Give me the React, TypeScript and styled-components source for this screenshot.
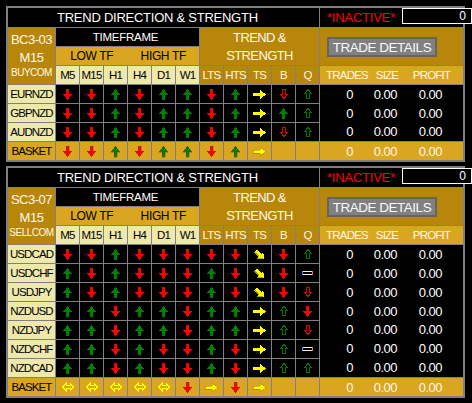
import React from 'react';
import styled, { createGlobalStyle } from 'styled-components';

const LINE = '#808080';
const DARK_GOLD = '#B8860B';
const GOLD = '#DAA520';
const PALE = '#EEE8AA';
const CREAM = '#FFF8E8';
const RED = '#FF0000';
const GREEN = '#008000';
const YELLOW = '#FFFF00';

interface PairRow {
  pair: string;
  sig: string;
}

interface PanelData {
  code: string;
  tf: string;
  mode: string;
  rows: PairRow[];
  basket: string;
}

// D down, U up, R right, X diagonal, d/u hollow, = flat, B both ways, _ empty
const PANELS: PanelData[] = [
  {
    code: 'BC3-03',
    tf: 'M15',
    mode: 'BUYCOM',
    rows: [
      { pair: 'EURNZD', sig: 'DDUDUUDURdu' },
      { pair: 'GBPNZD', sig: 'DDUDUUDURUu' },
      { pair: 'AUDNZD', sig: 'DDUDUUDURdu' },
    ],
    basket: 'DDUDUUDUR__',
  },
  {
    code: 'SC3-07',
    tf: 'M15',
    mode: 'SELLCOM',
    rows: [
      { pair: 'USDCAD', sig: 'DDUDDDDDXDu' },
      { pair: 'USDCHF', sig: 'UDUDDDUDXD=' },
      { pair: 'USDJPY', sig: 'UDUDDDUDXDd' },
      { pair: 'NZDUSD', sig: 'UUDUUDUURuD' },
      { pair: 'NZDJPY', sig: 'UUDUUDUURud' },
      { pair: 'NZDCHF', sig: 'UUDUDDUDRu=' },
      { pair: 'NZDCAD', sig: 'UUDUDDUDRuu' },
    ],
    basket: 'BBBBBDRDR__',
  },
];

const TF_COLS = ['M5', 'M15', 'H1', 'H4', 'D1', 'W1'];
const TS_COLS = ['LTS', 'HTS', 'TS', 'B', 'Q'];

const GlobalStyle = createGlobalStyle`
  html, body {
    margin: 0;
    padding: 0;
    background: #000;
  }
  body {
    font-family: 'Liberation Sans', Arial, sans-serif;
  }
`;

const Screen = styled.div`
  width: 472px;
  height: 403px;
  box-sizing: border-box;
  padding: 6px 0 0 6px;
  background: #000;
  display: flex;
  flex-direction: column;
  gap: 4px;
  overflow: hidden;
`;

const Frame = styled.div`
  position: relative;
  width: fit-content;
  border: 2px solid ${LINE};
`;

const Grid = styled.div<{ $rows: number }>`
  display: grid;
  grid-template-columns: 47px repeat(11, 23px) 143px;
  grid-template-rows: 19px repeat(${(p) => p.$rows + 4}, 18px);
  gap: 1px;
  background: ${LINE};
`;

const Cell = styled.div`
  display: flex;
  align-items: center;
  justify-content: center;
  white-space: nowrap;
  letter-spacing: -0.5px;
`;

const TitleCell = styled(Cell)`
  grid-column: span 12;
  justify-content: flex-start;
  padding-left: 49px;
  background: #000;
  color: #fff;
  font-size: 13px;
  letter-spacing: -0.25px;
`;

const StatusCell = styled(Cell)`
  justify-content: flex-start;
  padding-left: 7px;
  background: #000;
  color: ${RED};
  font-size: 13px;
  letter-spacing: -0.2px;
`;

const IdCell = styled(Cell)`
  grid-row: span 3;
  flex-direction: column;
  justify-content: flex-start;
  padding-top: 3px;
  background: ${DARK_GOLD};
  color: ${CREAM};
  font-size: 13px;
`;

const IdLine = styled.span<{ $small?: boolean }>`
  line-height: ${(p) => (p.$small ? 14 : 17.5)}px;
  font-size: ${(p) => (p.$small ? 10 : 13)}px;
`;

const TimeframeCell = styled(Cell)`
  grid-column: span 6;
  background: #000;
  color: #fff;
  font-size: 11.5px;
  letter-spacing: -0.25px;
  padding-right: 4px;
`;

const TrendCell = styled(Cell)`
  grid-column: span 5;
  grid-row: span 2;
  flex-direction: column;
  justify-content: flex-start;
  padding-top: 1px;
  background: ${DARK_GOLD};
  color: ${CREAM};
  font-size: 13px;
  line-height: 18px;
  letter-spacing: -0.6px;
`;

const DetailsCell = styled(Cell)`
  grid-row: span 2;
  align-items: flex-start;
  justify-content: flex-start;
  padding: 9px 0 0 7px;
  background: ${DARK_GOLD};
`;

const TradeButton = styled.div`
  width: 110px;
  height: 20px;
  box-sizing: border-box;
  display: flex;
  align-items: center;
  justify-content: center;
  background: #808080;
  border: 2px solid #646464;
  color: #fafafa;
  font-size: 13.5px;
  letter-spacing: -0.5px;
`;

const TfBand = styled(Cell)`
  grid-column: span 6;
  justify-content: space-around;
  background: ${GOLD};
  color: #000;
  font-size: 12px;
  letter-spacing: -0.35px;

  span {
    flex: 1;
    text-align: center;
  }
`;

const ColHead = styled(Cell)<{ $pale?: boolean }>`
  background: ${(p) => (p.$pale ? PALE : DARK_GOLD)};
  color: ${(p) => (p.$pale ? '#000' : CREAM)};
  font-size: 11.5px;
  letter-spacing: -0.8px;
`;

const StatHead = styled.div`
  display: grid;
  grid-template-columns: 54px 26px 63px;
  align-items: center;
  justify-items: center;
  background: ${GOLD};
  color: ${CREAM};
  font-size: 11.5px;
  letter-spacing: -0.8px;
`;

const PairCell = styled(Cell)<{ $basket?: boolean }>`
  background: ${(p) => (p.$basket ? GOLD : PALE)};
  color: #000;
  font-size: 11.5px;
  letter-spacing: -0.9px;
`;

const SignalCell = styled(Cell)<{ $basket?: boolean }>`
  background: ${(p) => (p.$basket ? GOLD : '#000')};
`;

const StatBody = styled.div<{ $span: number; $basket?: boolean }>`
  grid-row: span ${(p) => p.$span};
  display: flex;
  flex-direction: column;
  background: ${(p) => (p.$basket ? GOLD : '#000')};
  color: ${(p) => (p.$basket ? CREAM : '#fff')};
`;

const StatLine = styled.div`
  flex: 1;
  display: grid;
  grid-template-columns: 33px 44px 45px;
  align-items: center;
  justify-items: end;
  font-size: 13px;
  letter-spacing: -0.5px;
`;

const CountBox = styled.div`
  position: absolute;
  left: 394px;
  top: 0;
  width: 70px;
  height: 16px;
  box-sizing: border-box;
  border: 1px solid #fff;
  background: #000;
  color: #fff;
  font-size: 12px;
  line-height: 14px;
  text-align: right;
  padding-right: 5px;
`;

const Glyph = styled.svg`
  display: block;
  overflow: visible;
`;

const Tilted = styled(Glyph)`
  transform: rotate(45deg);
`;

const Arrow: React.FC<{ kind: string; basket?: boolean }> = ({ kind, basket }) => {
  const edge = basket ? 'rgba(110,60,0,0.55)' : 'none';
  switch (kind) {
    case 'D':
      return (
        <Glyph width={9} height={11} viewBox="0 0 9 11" shapeRendering="crispEdges">
          <path d="M3 0H6V5H9L4.5 11L0 5H3Z" fill={RED} stroke={edge} strokeWidth={0.6} />
        </Glyph>
      );
    case 'U':
      return (
        <Glyph width={9} height={11} viewBox="0 0 9 11" shapeRendering="crispEdges">
          <path d="M3 11H6V6H9L4.5 0L0 6H3Z" fill={GREEN} stroke={edge} strokeWidth={0.6} />
        </Glyph>
      );
    case 'R':
      return (
        <Glyph width={13} height={9} viewBox="0 0 13 9" shapeRendering="crispEdges">
          <path d="M0 3H7V0L13 4.5L7 9V6H0Z" fill={YELLOW} stroke={edge} strokeWidth={0.6} />
        </Glyph>
      );
    case 'X':
      return (
        <Tilted width={12} height={9} viewBox="0 0 13 9" shapeRendering="crispEdges">
          <path d="M0 3H7V0L13 4.5L7 9V6H0Z" fill="#A6A600" transform="translate(0 1.2)" />
          <path d="M0 3H7V0L13 4.5L7 9V6H0Z" fill={YELLOW} />
        </Tilted>
      );
    case 'd':
      return (
        <Glyph width={8} height={10} viewBox="0 0 8 10" shapeRendering="crispEdges">
          <path d="M2.5 0.5H5.5V5.5H7.5L4 9.5L0.5 5.5H2.5Z" fill="none" stroke="#E00000" strokeWidth={1} />
        </Glyph>
      );
    case 'u':
      return (
        <Glyph width={8} height={10} viewBox="0 0 8 10" shapeRendering="crispEdges">
          <path d="M2.5 9.5H5.5V4.5H7.5L4 0.5L0.5 4.5H2.5Z" fill="none" stroke="#007400" strokeWidth={1} />
        </Glyph>
      );
    case '=':
      return (
        <Glyph width={11} height={4} viewBox="0 0 11 4" shapeRendering="crispEdges">
          <rect x={0.5} y={0.5} width={10} height={3} fill="#000" stroke="#f0f0f0" strokeWidth={1} />
          <rect x={0} y={0} width={1} height={4} fill="#5a7dff" />
          <rect x={10} y={0} width={1} height={4} fill="#ff6a5a" />
        </Glyph>
      );
    case 'B':
      return (
        <Glyph width={12} height={8} viewBox="0 0 12 8" shapeRendering="crispEdges">
          <path d="M0.5 4L4 0.5V2.5H8V0.5L11.5 4L8 7.5V5.5H4V7.5Z" fill="none" stroke={YELLOW} strokeWidth={1} />
        </Glyph>
      );
    default:
      return null;
  }
};

const Stats: React.FC = () => (
  <StatLine>
    <span>0</span>
    <span>0.00</span>
    <span>0.00</span>
  </StatLine>
);

const Panel: React.FC<{ data: PanelData }> = ({ data }) => (
  <Frame>
    <Grid $rows={data.rows.length}>
      <TitleCell>TREND DIRECTION &amp; STRENGTH</TitleCell>
      <StatusCell>*INACTIVE*</StatusCell>

      <IdCell>
        <IdLine>{data.code}</IdLine>
        <IdLine>{data.tf}</IdLine>
        <IdLine $small>{data.mode}</IdLine>
      </IdCell>
      <TimeframeCell>TIMEFRAME</TimeframeCell>
      <TrendCell>
        <span>TREND &amp;</span>
        <span>STRENGTH</span>
      </TrendCell>
      <DetailsCell>
        <TradeButton>TRADE DETAILS</TradeButton>
      </DetailsCell>

      <TfBand>
        <span>LOW TF</span>
        <span>HIGH TF</span>
      </TfBand>

      {TF_COLS.map((c) => (
        <ColHead key={c} $pale>
          {c}
        </ColHead>
      ))}
      {TS_COLS.map((c) => (
        <ColHead key={c}>{c}</ColHead>
      ))}
      <StatHead>
        <span>TRADES</span>
        <span>SIZE</span>
        <span>PROFIT</span>
      </StatHead>

      {data.rows.map((row, i) => (
        <React.Fragment key={row.pair}>
          <PairCell>{row.pair}</PairCell>
          {row.sig.split('').map((s, j) => (
            <SignalCell key={j}>
              <Arrow kind={s} />
            </SignalCell>
          ))}
          {i === 0 && (
            <StatBody $span={data.rows.length}>
              {data.rows.map((r) => (
                <Stats key={r.pair} />
              ))}
            </StatBody>
          )}
        </React.Fragment>
      ))}

      <PairCell $basket>BASKET</PairCell>
      {data.basket.split('').map((s, j) => (
        <SignalCell key={j} $basket>
          <Arrow kind={s} basket />
        </SignalCell>
      ))}
      <StatBody $span={1} $basket>
        <Stats />
      </StatBody>
    </Grid>
    <CountBox>0</CountBox>
  </Frame>
);

export default function App() {
  return (
    <>
      <GlobalStyle />
      <Screen>
        {PANELS.map((p) => (
          <Panel key={p.code} data={p} />
        ))}
      </Screen>
    </>
  );
}
